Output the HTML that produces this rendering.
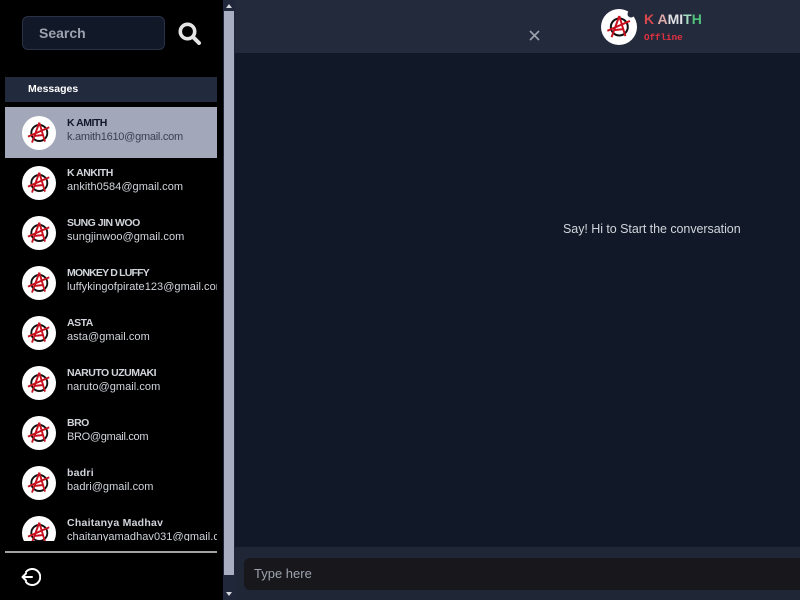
<!DOCTYPE html>
<html lang="en">
<head>
<meta charset="utf-8">
<title>Chat</title>
<style>
*{box-sizing:border-box;margin:0;padding:0}
html,body{width:800px;height:600px;overflow:hidden;background:#111827;font-family:"Liberation Sans",sans-serif}
.abs{position:absolute}
#side{position:absolute;left:0;top:0;width:223px;height:600px;background:#000}
#track{position:absolute;left:223px;top:0;width:12px;height:600px;background:#20273a}
#thumb{position:absolute;left:1px;top:11px;width:10px;height:564px;background:#a9adc1}
.arr{position:absolute;left:3px;width:0;height:0;border-left:3px solid transparent;border-right:3px solid transparent}
#search{position:absolute;left:22px;top:16px;width:143px;height:34px;background:#111827;border:1px solid #2a3146;border-radius:6px;color:#9ca3af;font-weight:700;font-size:14px;line-height:33px;padding-left:16px}
#msg{position:absolute;left:5px;top:77px;width:212px;height:25px;background:#222a3d;color:#fff;font-weight:700;font-size:10.5px;line-height:25px;padding-left:23px}
#list{position:absolute;left:5px;top:107px;width:212px;height:434px;overflow:hidden}
.row{position:relative;height:50px;width:212px;color:#d1d5db}
.row.on{background:#a3a7ba;height:51px;margin-bottom:-1px;color:#111827}
.row svg{position:absolute;left:17px;top:9px}
.n{position:absolute;left:62px;top:10px;font-weight:700;font-size:10.5px;line-height:13px;white-space:nowrap;letter-spacing:-.5px}
.n.l{letter-spacing:.25px}
.e{position:absolute;left:62px;top:23px;font-size:11px;line-height:15px;white-space:nowrap;letter-spacing:.05px}
.on .e{color:#374151;letter-spacing:-.25px}
#line{position:absolute;left:5px;top:551px;width:212px;height:2px;background:#a3a3a3}
#head{position:absolute;left:235px;top:0;width:565px;height:53px;background:#232a3b}
#x{position:absolute;left:528px;top:29px}
#top-av{position:absolute;left:601px;top:9px}
#name{position:absolute;left:644px;top:11px;font-weight:700;font-size:14px;line-height:16px;white-space:nowrap}
#off{position:absolute;left:644px;top:31px;font-family:"Liberation Mono",monospace;font-weight:700;font-size:9.2px;line-height:13px;color:#e5303f}
#say{position:absolute;left:563px;top:221px;color:#d1d5db;font-size:12.5px;line-height:16px;white-space:nowrap;letter-spacing:-.05px}
#foot{position:absolute;left:235px;top:547px;width:565px;height:53px;background:#1f2636}
#input{position:absolute;left:244px;top:558px;width:556px;height:32px;background:#18171b;border-radius:6px 0 0 6px;color:#9ca3af;font-size:13px;line-height:32px;padding-left:10px}
</style>
</head>
<body>
<svg width="0" height="0" style="position:absolute">
<defs>
<symbol id="av" viewBox="0 0 34 34">
<circle cx="17" cy="17" r="17" fill="#fff"/>
<circle cx="17.3" cy="17" r="8" fill="none" stroke="#111" stroke-width="1.9"/>
<path d="M17.3 6.6 L10 26.6 M17.3 6.6 L23 25.6 M6 20.6 L27.3 11.3 M12 20 L21 19" fill="none" stroke="#c8101e" stroke-width="1.9"/>
</symbol>
</defs>
</svg>

<div id="side">
  <div id="search">Search</div>
  <svg class="abs" style="left:178px;top:22px" width="23" height="23" viewBox="0 0 23 23">
    <circle cx="9.5" cy="9.5" r="7.2" fill="none" stroke="#e5e5e5" stroke-width="3.6"/>
    <path d="M15 15 L21 21" stroke="#e5e5e5" stroke-width="4" stroke-linecap="round"/>
  </svg>
  <div id="msg">Messages</div>
  <div id="list">
    <div class="row on"><svg width="34" height="34"><use href="#av"/></svg><div class="n">K AMITH</div><div class="e">k.amith1610@gmail.com</div></div>
    <div class="row"><svg width="34" height="34"><use href="#av"/></svg><div class="n">K ANKITH</div><div class="e">ankith0584@gmail.com</div></div>
    <div class="row"><svg width="34" height="34"><use href="#av"/></svg><div class="n">SUNG JIN WOO</div><div class="e">sungjinwoo@gmail.com</div></div>
    <div class="row"><svg width="34" height="34"><use href="#av"/></svg><div class="n" style="letter-spacing:-.8px">MONKEY D LUFFY</div><div class="e">luffykingofpirate123@gmail.com</div></div>
    <div class="row"><svg width="34" height="34"><use href="#av"/></svg><div class="n">ASTA</div><div class="e">asta@gmail.com</div></div>
    <div class="row"><svg width="34" height="34"><use href="#av"/></svg><div class="n">NARUTO UZUMAKI</div><div class="e">naruto@gmail.com</div></div>
    <div class="row"><svg width="34" height="34"><use href="#av"/></svg><div class="n">BRO</div><div class="e" style="letter-spacing:-.3px">BRO@gmail.com</div></div>
    <div class="row"><svg width="34" height="34"><use href="#av"/></svg><div class="n l">badri</div><div class="e">badri@gmail.com</div></div>
    <div class="row"><svg width="34" height="34"><use href="#av"/></svg><div class="n l">Chaitanya Madhav</div><div class="e">chaitanyamadhav031@gmail.com</div></div>
  </div>
  <div id="line"></div>
  <svg class="abs" style="left:21px;top:567px" width="20" height="20" viewBox="0 0 20 20">
    <path d="M5 5 A8 8 0 1 1 5 15" fill="none" stroke="#fff" stroke-width="2" stroke-linecap="round"/>
    <path d="M11 10 H1.5 M5 6.5 L1.5 10 L5 13.5" fill="none" stroke="#fff" stroke-width="2" stroke-linecap="round" stroke-linejoin="round"/>
  </svg>
</div>

<div id="track">
  <div class="arr" style="top:4px;border-bottom:4px solid #d8d8e0"></div>
  <div id="thumb"></div>
  <div class="arr" style="top:592px;border-top:4px solid #d8d8e0"></div>
</div>

<div id="head"></div>
<svg id="x" width="13" height="13" viewBox="0 0 13 13"><path d="M2 2 L11 11 M11 2 L2 11" stroke="#9ca3af" stroke-width="1.6"/></svg>
<svg id="top-av" width="36" height="36"><use href="#av"/><circle cx="30" cy="5" r="3.5" fill="#232a3b"/></svg>
<div id="name"><span style="color:#d9484f">K </span><span style="color:#dba9a9">A</span><span style="color:#dfe0e4">MI</span><span style="color:#a3dcc0">T</span><span style="color:#4fc27a">H</span></div>
<div id="off">Offline</div>

<div id="say">Say! Hi to Start the conversation</div>

<div id="foot"></div>
<div id="input">Type here</div>
</body>
</html>
